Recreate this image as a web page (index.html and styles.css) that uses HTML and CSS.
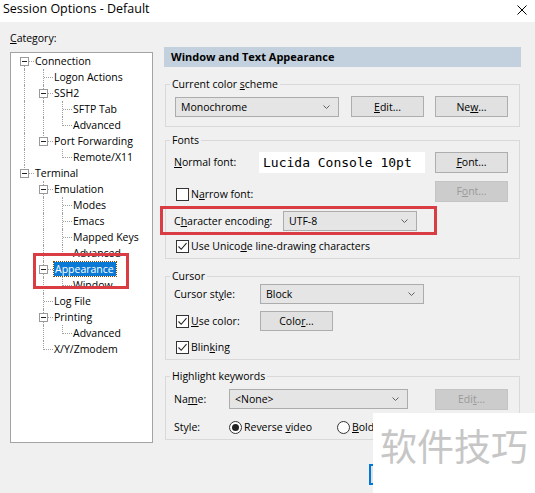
FILE: index.html
```html
<!DOCTYPE html>
<html>
<head>
<meta charset="utf-8">
<title>Session Options - Default</title>
<link rel="stylesheet" href="styles.css">
</head>
<body>
<div class="titlebar">
  <span class="title">Session Options - Default</span>
  <svg class="close" width="10" height="10" viewBox="0 0 10 10"><path d="M0.5 0.5L9.5 9.5M9.5 0.5L0.5 9.5" stroke="#000" stroke-width="1" fill="none"/></svg>
</div>
<div class="main">
  <div class="left">
    <div class="cat-label"><u>C</u>ategory:</div>
    <div class="tree">
      <div class="tr"><span class="c first"><i class="box"></i></span><span class="t">Connection</span></div>
      <div class="tr"><span class="c pipe"></span><span class="c tee"></span><span class="t">Logon Actions</span></div>
      <div class="tr"><span class="c pipe"></span><span class="c tee"><i class="box"></i></span><span class="t">SSH2</span></div>
      <div class="tr"><span class="c pipe"></span><span class="c pipe"></span><span class="c tee"></span><span class="t">SFTP Tab</span></div>
      <div class="tr"><span class="c pipe"></span><span class="c pipe"></span><span class="c ell"></span><span class="t">Advanced</span></div>
      <div class="tr"><span class="c pipe"></span><span class="c ell"><i class="box"></i></span><span class="t">Port Forwarding</span></div>
      <div class="tr"><span class="c pipe"></span><span class="c"></span><span class="c ell"></span><span class="t">Remote/X11</span></div>
      <div class="tr"><span class="c ell"><i class="box"></i></span><span class="t">Terminal</span></div>
      <div class="tr"><span class="c"></span><span class="c tee"><i class="box"></i></span><span class="t">Emulation</span></div>
      <div class="tr"><span class="c"></span><span class="c pipe"></span><span class="c tee"></span><span class="t">Modes</span></div>
      <div class="tr"><span class="c"></span><span class="c pipe"></span><span class="c tee"></span><span class="t">Emacs</span></div>
      <div class="tr"><span class="c"></span><span class="c pipe"></span><span class="c tee"></span><span class="t">Mapped Keys</span></div>
      <div class="tr"><span class="c"></span><span class="c pipe"></span><span class="c ell"></span><span class="t">Advanced</span></div>
      <div class="tr"><span class="c"></span><span class="c tee"><i class="box"></i></span><span class="t sel">Appearance</span></div>
      <div class="tr"><span class="c"></span><span class="c pipe"></span><span class="c ell"></span><span class="t">Window</span></div>
      <div class="tr"><span class="c"></span><span class="c tee"></span><span class="t">Log File</span></div>
      <div class="tr"><span class="c"></span><span class="c tee"><i class="box"></i></span><span class="t">Printing</span></div>
      <div class="tr"><span class="c"></span><span class="c pipe"></span><span class="c ell"></span><span class="t">Advanced</span></div>
      <div class="tr"><span class="c"></span><span class="c ell"></span><span class="t">X/Y/Zmodem</span></div>
    </div>
  </div>

  <div class="right">
    <div class="header">Window and Text Appearance</div>

    <fieldset class="grp g-scheme">
      <legend>Current color <u>s</u>cheme</legend>
      <div class="frow h21">
        <div class="combo w-scheme"><span>Monochrome</span><svg class="chev" width="7" height="4" viewBox="0 0 7 4"><path d="M0.5 0.5L3.5 3.5L6.5 0.5" stroke="#606060" fill="none"/></svg></div>
        <span class="btn ml12"><u>E</u>dit...</span>
        <span class="btn ml11">Ne<u>w</u>...</span>
      </div>
    </fieldset>

    <fieldset class="grp g-fonts">
      <legend>Fonts</legend>
      <div class="frow">
        <span class="lbl w85"><u>N</u>ormal font:</span>
        <span class="fontbox">Lucida Console 10pt</span>
        <span class="btn mla"><u>F</u>ont...</span>
      </div>
      <div class="frow mt7">
        <span class="chkwrap low"><span class="chk"></span><span class="chklbl">N<u>a</u>rrow font:</span></span>
        <span class="btn dis mla">F<u>o</u>nt...</span>
      </div>
      <div class="frow mt8">
        <span class="lbl w109">C<u>h</u>aracter encoding:</span>
        <div class="combo w-enc"><span>UTF-8</span><svg class="chev" width="7" height="4" viewBox="0 0 7 4"><path d="M0.5 0.5L3.5 3.5L6.5 0.5" stroke="#606060" fill="none"/></svg></div>
      </div>
      <div class="frow mt6 h16">
        <span class="chk on"><svg width="11" height="11" viewBox="0 0 11 11"><path d="M1.5 5.5L4.2 8.3L9.5 2.2" stroke="#222" stroke-width="1.1" fill="none"/></svg></span><span class="chklbl">Use Unico<u>d</u>e line-drawing characters</span>
      </div>
    </fieldset>

    <fieldset class="grp g-cursor">
      <legend>Cursor</legend>
      <div class="frow">
        <span class="lbl w86">Cursor st<u>y</u>le:</span>
        <div class="combo w-cur"><span>Block</span><svg class="chev" width="7" height="4" viewBox="0 0 7 4"><path d="M0.5 0.5L3.5 3.5L6.5 0.5" stroke="#606060" fill="none"/></svg></div>
      </div>
      <div class="frow mt5">
        <span class="chkwrap w86"><span class="chk on"><svg width="11" height="11" viewBox="0 0 11 11"><path d="M1.5 5.5L4.2 8.3L9.5 2.2" stroke="#222" stroke-width="1.1" fill="none"/></svg></span><span class="chklbl"><u>U</u>se color:</span></span>
        <span class="btn h20">Colo<u>r</u>...</span>
      </div>
      <div class="frow mt6 h18">
        <span class="chk on"><svg width="11" height="11" viewBox="0 0 11 11"><path d="M1.5 5.5L4.2 8.3L9.5 2.2" stroke="#222" stroke-width="1.1" fill="none"/></svg></span><span class="chklbl">Blin<u>k</u>ing</span>
      </div>
    </fieldset>

    <fieldset class="grp g-high">
      <legend>Highlight keywords</legend>
      <div class="frow">
        <span class="lbl w55">Na<u>m</u>e:</span>
        <div class="combo w-name"><span>&lt;None&gt;</span><svg class="chev" width="7" height="4" viewBox="0 0 7 4"><path d="M0.5 0.5L3.5 3.5L6.5 0.5" stroke="#606060" fill="none"/></svg></div>
        <span class="btn dis mla">Edi<u>t</u>...</span>
      </div>
      <div class="frow mt8 h18">
        <span class="lbl w55">Style:</span>
        <span class="radwrap w108"><span class="rad on"></span><span class="chklbl">Reverse <u>v</u>ideo</span></span>
        <span class="radwrap"><span class="rad"></span><span class="chklbl"><u>B</u>old</span></span>
      </div>
    </fieldset>

    <div class="actions">
      <span class="btn def"></span>
      <span class="btn"></span>
    </div>
  </div>
</div>

<div class="mark mark-tree"></div>
<div class="mark mark-enc"></div>
<div class="watermark">软件技巧</div>
</body>
</html>
```

FILE: styles.css
```css
* { box-sizing: border-box; }

body {
  margin: 0;
  width: 535px;
  height: 493px;
  overflow: hidden;
  position: relative;
  background: #f0f0f0;
  font-family: "Open Sans", "Noto Sans", sans-serif;
  font-size: 10.5px;
  color: #000;
}

u { text-decoration: underline; text-underline-offset: 1px; }

/* title bar */
.titlebar {
  height: 22px;
  background: #fff;
  display: flex;
  justify-content: space-between;
  align-items: flex-start;
  padding: 0 8px 0 3px;
}
.title { font-size: 12.5px; line-height: 18px; }
.close { margin-top: 5px; }

/* layout */
.main { display: flex; padding-left: 10px; }
.left { width: 143px; flex-shrink: 0; }
.right { margin-left: 11px; width: 357px; flex-shrink: 0; }

.cat-label { margin-top: 8px; line-height: 16px; }

/* tree */
.tree {
  margin-top: 6px;
  height: 391px;
  border: 1px solid #a3a3a3;
  background: #fff;
  padding-left: 4px;
}
.tr { display: flex; height: 16px; align-items: center; }
.c { position: relative; width: 19px; height: 16px; flex-shrink: 0; }
.c.pipe::before,
.c.tee::before,
.c.ell::before,
.c.first::before {
  content: "";
  position: absolute;
  left: 9px;
  border-left: 1px dotted #a0a0a0;
}
.c.pipe::before, .c.tee::before { top: 0; height: 16px; }
.c.ell::before { top: 0; height: 9px; }
.c.first::before { top: 8px; height: 8px; }
.c.tee::after,
.c.ell::after,
.c.first::after {
  content: "";
  position: absolute;
  left: 10px;
  top: 8px;
  width: 9px;
  border-top: 1px dotted #a0a0a0;
}
.box {
  position: absolute;
  z-index: 1;
  left: 5px;
  top: 4px;
  width: 9px;
  height: 9px;
  border: 1px solid #9a9a9a;
  background: #fff;
}
.box::before {
  content: "";
  position: absolute;
  left: 1px;
  top: 3px;
  width: 5px;
  height: 1px;
  background: #222;
}
.t { padding-left: 1px; line-height: 16px; white-space: nowrap; }
.t.sel {
  margin-left: 1px;
  padding: 0 2px 0 1px;
  line-height: 14px;
  background: #0a78d5;
  color: #fff;
  outline: 1px dotted #7a4a10;
}

/* right panel */
.header {
  margin-top: 25px;
  height: 20px;
  line-height: 20px;
  background: #c3d0dd;
  font-weight: bold;
  font-size: 11px;
  padding-left: 7px;
}

.grp {
  margin: 0 1px;
  min-width: 0;
  border: 1px solid #d9d9d9;
  padding: 0 11px 0 8px;
}
.grp legend {
  line-height: 14px;
  padding: 0 2px;
  margin-left: -4px;
}
.g-scheme { margin-top: 10px; padding-top: 5px; padding-bottom: 9px; }
.g-fonts { margin-top: 6px; padding-top: 4px; padding-bottom: 4px; }
.g-cursor { margin-top: 10px; padding-top: 0; padding-bottom: 3px; }
.g-high { margin-top: 9px; padding-top: 5px; padding-bottom: 3px; }

.frow { display: flex; align-items: center; height: 22px; }
.frow.h21 { height: 21px; }
.frow.h16 { height: 16px; }
.frow.h18 { height: 18px; }
.mt5 { margin-top: 5px; }
.mt6 { margin-top: 6px; }
.mt7 { margin-top: 7px; }
.mt8 { margin-top: 8px; }
.ml11 { margin-left: 11px; }
.ml12 { margin-left: 12px; }
.mla { margin-left: auto; }

.lbl { flex-shrink: 0; white-space: nowrap; }
.w55 { width: 55px; }
.w85 { width: 85px; }
.w86 { width: 86px; }
.w108 { width: 108px; }
.w109 { width: 109px; }

.combo {
  height: 20px;
  display: flex;
  align-items: center;
  justify-content: space-between;
  padding: 0 8px 0 5px;
  background: #e5e5e5;
  border: 1px solid #acacac;
  flex-shrink: 0;
}
.combo .chev { display: block; }
.w-scheme { width: 164px; margin-left: 1px; }
.w-enc { width: 134px; }
.w-cur { width: 164px; }
.w-name { width: 179px; }

.btn {
  width: 73px;
  height: 21px;
  display: flex;
  align-items: center;
  justify-content: center;
  background: #e1e1e1;
  border: 1px solid #adadad;
  flex-shrink: 0;
  white-space: nowrap;
}
.btn.h20 { height: 20px; }
.btn.dis { background: #cccccc; border-color: #c4c4c4; color: #9a9a9a; }
.btn.def { border: 2px solid #0078d7; }

.fontbox {
  width: 166px;
  height: 21px;
  background: #fff;
  font-family: "DejaVu Sans Mono", "Liberation Mono", monospace;
  font-size: 13px;
  line-height: 21px;
  padding-left: 4px;
  white-space: nowrap;
}

.chkwrap, .radwrap { display: flex; align-items: center; flex-shrink: 0; }
.chkwrap.low { align-self: flex-end; margin-bottom: 1px; }
.chk {
  width: 13px;
  height: 13px;
  margin-left: 2px;
  border: 1px solid #333;
  background: #fff;
  flex-shrink: 0;
  display: flex;
  align-items: center;
  justify-content: center;
}
.chk svg { display: block; }
.chklbl { margin-left: 2px; white-space: nowrap; }

.rad {
  width: 13px;
  height: 13px;
  border: 1px solid #333;
  border-radius: 50%;
  background: #fff;
  flex-shrink: 0;
  display: flex;
  align-items: center;
  justify-content: center;
}
.rad.on::before {
  content: "";
  width: 7px;
  height: 7px;
  border-radius: 50%;
  background: #222;
}

.actions {
  display: flex;
  justify-content: flex-end;
  gap: 6px;
  margin-top: 24px;
}

/* annotations / overlays */
.mark {
  position: absolute;
  border: 3px solid #da3c43;
}
.mark-tree { left: 33px; top: 253px; width: 96px; height: 36px; }
.mark-enc { left: 160px; top: 206px; width: 277px; height: 29px; }

.watermark {
  position: absolute;
  left: 373px;
  top: 413px;
  width: 162px;
  height: 80px;
  background: #fff;
  color: #c6c6c6;
  font-family: "Noto Sans CJK SC", sans-serif;
  font-size: 37px;
  line-height: 1;
  padding: 14px 0 0 7px;
  white-space: nowrap;
}
```
